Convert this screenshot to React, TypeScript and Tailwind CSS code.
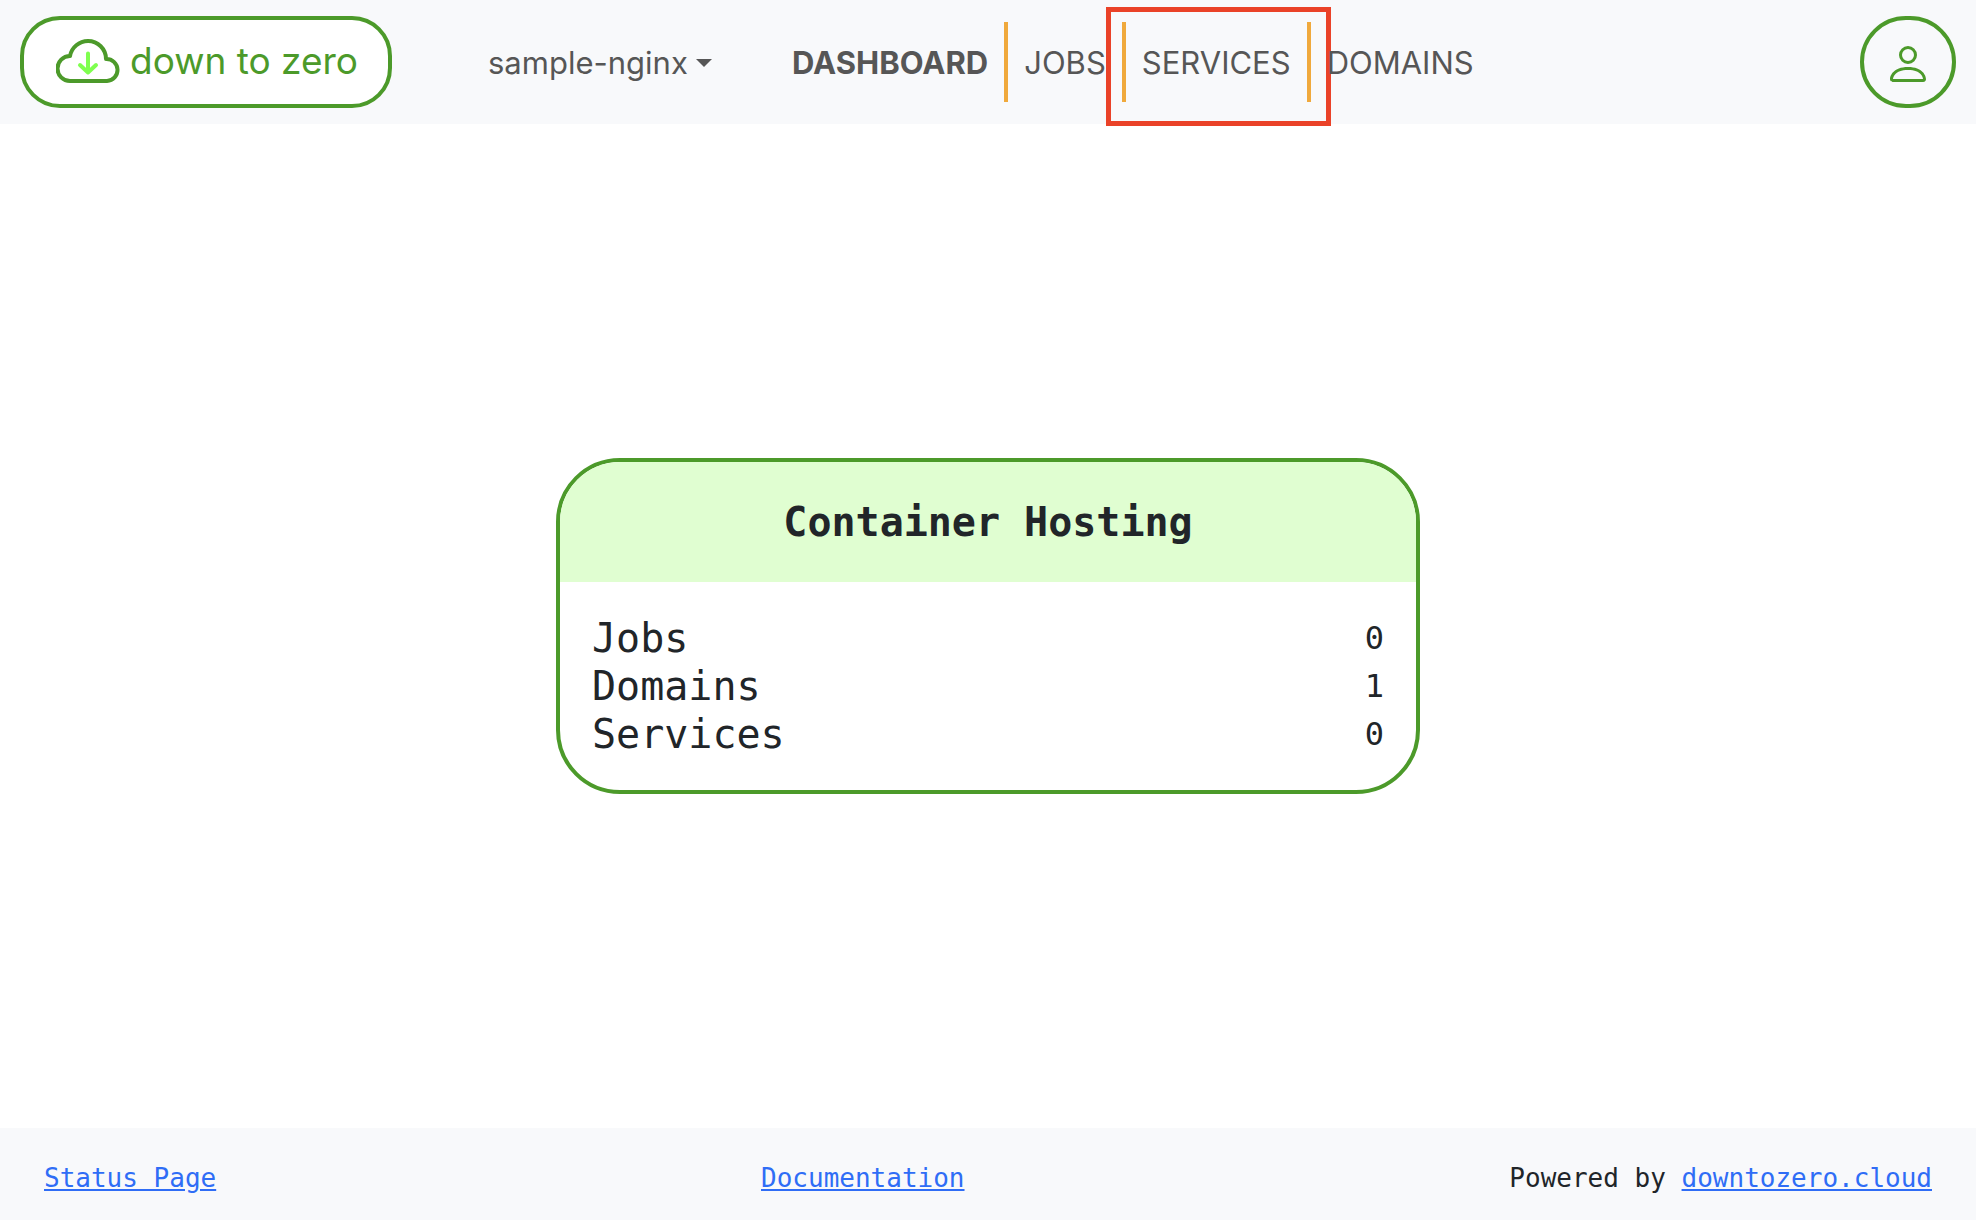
import { BsPerson } from "react-icons/bs";

type NavItem = {
  label: string;
  href: string;
  active?: boolean;
  highlighted?: boolean;
};

const navItems: NavItem[] = [
  { label: "DASHBOARD", href: "#dashboard", active: true },
  { label: "JOBS", href: "#jobs" },
  { label: "SERVICES", href: "#services", highlighted: true },
  { label: "DOMAINS", href: "#domains" },
];

const stats = [
  { label: "Jobs", count: 0 },
  { label: "Domains", count: 1 },
  { label: "Services", count: 0 },
];

function CloudLogo() {
  return (
    <svg viewBox="0 0 64 44" className="h-11 w-16 shrink-0" fill="none" aria-hidden="true">
      <path
        d="M14 42 A12.5 12.5 0 0 1 14 17 A18.5 18.5 0 0 1 32 2 A18 18 0 0 1 50 20 A11 11 0 0 1 51 42 Z"
        stroke="#4c9a2a"
        strokeWidth="4"
        strokeLinejoin="round"
      />
      <path
        d="M32 14.5 V33.5 M24 26 L32 33.5 L40 26"
        stroke="#7fff4f"
        strokeWidth="4"
        strokeLinecap="round"
        strokeLinejoin="round"
      />
    </svg>
  );
}

function Header() {
  return (
    <header className="flex items-center bg-[#f8f9fb] px-5 py-4 font-[Inter,sans-serif] text-[#565656]">
      <a
        href="#home"
        className="flex h-[92px] w-[372px] items-center gap-2.5 rounded-[40px] border-4 border-[#4c9a2a] bg-white pb-0.5 pl-8 text-[37px] whitespace-nowrap text-[#4c9a2a]"
      >
        <CloudLogo />
        down to zero
      </a>

      <button
        type="button"
        className="ml-24 flex w-[224px] items-center gap-2 pt-0.5 text-[31px] whitespace-nowrap"
      >
        sample-nginx
        <svg viewBox="0 0 16 8" className="h-2 w-4 shrink-0" aria-hidden="true">
          <path d="M0 0 H16 L8 8 Z" fill="currentColor" />
        </svg>
      </button>

      <nav className="ml-20 flex text-[31px]">
        {navItems.map((item, index) => (
          <div key={item.label} className="relative flex">
            <a
              href={item.href}
              className={`flex h-20 items-center pt-0.5 ${
                index === 0 ? "pr-4" : index === navItems.length - 1 ? "pl-4" : "px-4"
              } ${index < navItems.length - 1 ? "border-r-4 border-[#f0a93c]" : ""} ${
                item.active ? "font-bold" : ""
              }`}
            >
              {item.label}
            </a>
            {item.highlighted && (
              <span className="pointer-events-none absolute -inset-x-5 -top-[15px] -bottom-6 border-5 border-[#ea4228]" />
            )}
          </div>
        ))}
      </nav>

      <button
        type="button"
        aria-label="Account"
        className="ml-auto flex h-[92px] w-24 items-center justify-center rounded-full border-4 border-[#4c9a2a] pt-1 text-[#4c9a2a]"
      >
        <BsPerson className="size-12" />
      </button>
    </header>
  );
}

function HostingCard() {
  return (
    <section className="w-[864px] overflow-hidden rounded-[64px] border-4 border-[#4c9a2a]">
      <h1 className="bg-[#e0fed1] py-9 text-center text-[40px] leading-[48px] font-bold">
        Container Hosting
      </h1>
      <dl className="p-8">
        {stats.map((stat) => (
          <div key={stat.label} className="flex h-12 items-center justify-between">
            <dt className="text-[40px] leading-[48px]">{stat.label}</dt>
            <dd className="text-[32px] leading-[48px]">{stat.count}</dd>
          </div>
        ))}
      </dl>
    </section>
  );
}

function Footer() {
  const link = "text-[#2f6df6] underline";

  return (
    <footer className="flex items-center justify-between bg-[#f8f9fb] px-11 pt-8 pb-6 text-[26px] leading-9">
      <a href="#status" className={link}>
        Status Page
      </a>
      <a href="#docs" className={link}>
        Documentation
      </a>
      <p>
        Powered by{" "}
        <a href="#downtozero" className={link}>
          downtozero.cloud
        </a>
      </p>
    </footer>
  );
}

export default function App() {
  return (
    <div className="flex min-h-screen flex-col bg-white font-['DejaVu_Sans_Mono',monospace] text-[#212529]">
      <Header />
      <main className="flex flex-1 items-center justify-center">
        <HostingCard />
      </main>
      <Footer />
    </div>
  );
}
